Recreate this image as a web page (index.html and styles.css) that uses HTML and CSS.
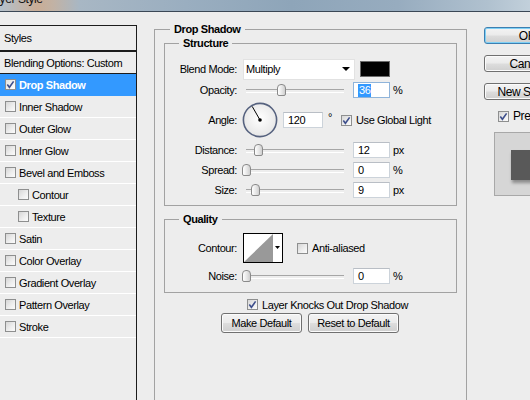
FILE: index.html
```html
<!DOCTYPE html>
<html>
<head>
<meta charset="utf-8">
<title>Layer Style</title>
<link rel="stylesheet" href="styles.css">
</head>
<body>
<div class="titlebar"><span class="title">Layer Style</span></div>
<div class="dialog">
  <div class="styles-panel">
    <div class="styles-head">Styles</div>
    <div class="style-row blending">Blending Options: Custom</div>
    <div class="style-row selected"><span class="cb"><svg viewBox="0 0 11 11" width="11" height="11"><path d="M2.3 5.6 L4.4 8.3 L8.6 2.4" fill="none" stroke="#3e4f8c" stroke-width="1.6"/></svg></span>Drop Shadow</div>
    <div class="style-row"><span class="cb"></span>Inner Shadow</div>
    <div class="style-row"><span class="cb"></span>Outer Glow</div>
    <div class="style-row"><span class="cb"></span>Inner Glow</div>
    <div class="style-row"><span class="cb"></span>Bevel and Emboss</div>
    <div class="style-row sub"><span class="cb"></span>Contour</div>
    <div class="style-row sub"><span class="cb"></span>Texture</div>
    <div class="style-row"><span class="cb"></span>Satin</div>
    <div class="style-row"><span class="cb"></span>Color Overlay</div>
    <div class="style-row"><span class="cb"></span>Gradient Overlay</div>
    <div class="style-row"><span class="cb"></span>Pattern Overlay</div>
    <div class="style-row"><span class="cb"></span>Stroke</div>
  </div>

  <fieldset class="group outer">
    <legend>Drop Shadow</legend>
    <fieldset class="group inner">
      <legend>Structure</legend>
      <div class="row row-blend">
        <span class="label">Blend Mode:</span>
        <div class="select"><span>Multiply</span><span class="arrow"></span></div>
        <span class="swatch"></span>
      </div>
      <div class="row row-first">
        <span class="label">Opacity:</span>
        <div class="slider"><span class="thumb" style="left:31px"></span></div>
        <div class="field focused"><span class="sel">36</span></div>
        <span class="unit">%</span>
      </div>
      <div class="row row-angle">
        <span class="label">Angle:</span>
        <svg class="dial" width="36" height="36" viewBox="0 0 36 36">
          <defs>
            <radialGradient id="dg" cx="50%" cy="45%" r="60%">
              <stop offset="0" stop-color="#ffffff"/>
              <stop offset="1" stop-color="#e4e4e4"/>
            </radialGradient>
          </defs>
          <circle cx="18" cy="18" r="16.6" fill="url(#dg)" stroke="#56627f" stroke-width="1.6"/>
          <line x1="18" y1="18" x2="10.2" y2="4.4" stroke="#000" stroke-width="1"/>
          <circle cx="18" cy="18" r="1.8" fill="#000"/>
        </svg>
        <div class="field angle">120</div>
        <span class="deg">°</span>
        <span class="cb global"><svg viewBox="0 0 11 11" width="11" height="11"><path d="M2.3 5.6 L4.4 8.3 L8.6 2.4" fill="none" stroke="#3e4f8c" stroke-width="1.6"/></svg></span>
        <span class="cb-label">Use Global Light</span>
      </div>
      <div class="row">
        <span class="label">Distance:</span>
        <div class="slider"><span class="thumb" style="left:8px"></span></div>
        <div class="field">12</div>
        <span class="unit">px</span>
      </div>
      <div class="row">
        <span class="label">Spread:</span>
        <div class="slider"><span class="thumb" style="left:-4px"></span></div>
        <div class="field">0</div>
        <span class="unit">%</span>
      </div>
      <div class="row">
        <span class="label">Size:</span>
        <div class="slider"><span class="thumb" style="left:5px"></span></div>
        <div class="field">9</div>
        <span class="unit">px</span>
      </div>
    </fieldset>

    <fieldset class="group inner quality">
      <legend>Quality</legend>
      <div class="row row-contour">
        <span class="label">Contour:</span>
        <svg class="contour" width="40" height="30" viewBox="0 0 40 30">
          <rect x="0.5" y="0.5" width="39" height="29" fill="#fff" stroke="#000"/>
          <polygon points="1,29 30,1 30,29" fill="#999"/>
          <polygon points="32,13 37,13 34.5,16" fill="#000"/>
        </svg>
        <span class="cb anti"></span>
        <span class="cb-label">Anti-aliased</span>
      </div>
      <div class="row">
        <span class="label">Noise:</span>
        <div class="slider"><span class="thumb" style="left:-4px"></span></div>
        <div class="field">0</div>
        <span class="unit">%</span>
      </div>
    </fieldset>

    <div class="knocks">
      <span class="cb"><svg viewBox="0 0 11 11" width="11" height="11"><path d="M2.3 5.6 L4.4 8.3 L8.6 2.4" fill="none" stroke="#3e4f8c" stroke-width="1.6"/></svg></span>
      <span class="cb-label">Layer Knocks Out Drop Shadow</span>
    </div>
    <div class="defaults">
      <div class="btn make">Make Default</div>
      <div class="btn reset">Reset to Default</div>
    </div>
  </fieldset>

  <div class="side">
    <div class="btn side-btn ok">OK</div>
    <div class="btn side-btn">Cancel</div>
    <div class="btn side-btn">New Style...</div>
    <div class="preview-row">
      <span class="cb"><svg viewBox="0 0 11 11" width="11" height="11"><path d="M2.3 5.6 L4.4 8.3 L8.6 2.4" fill="none" stroke="#3e4f8c" stroke-width="1.6"/></svg></span>
      <span class="cb-label big">Preview</span>
    </div>
    <div class="preview-box"><div class="preview-square"></div></div>
  </div>
</div>
</body>
</html>
```

FILE: styles.css
```css
* { box-sizing: border-box; }
html, body { margin: 0; padding: 0; }
body {
  width: 530px;
  height: 400px;
  overflow: hidden;
  background: #ededed;
  font-family: "Liberation Sans", Arial, sans-serif;
  font-size: 11px;
  letter-spacing: -0.4px;
  color: #000;
}

.titlebar {
  height: 12px;
  overflow: hidden;
  border-bottom: 1px solid #3b4856;
  background: linear-gradient(to right, #b3c1cd 0%, #c9ad96 7%, #c2b2a4 10%, #a8b7c4 15%, #9aaec0 35%, #8ea5b9 55%, #97acbf 75%, #b0c1cf 92%, #c2d0db 100%);
}
.title {
  display: block;
  font-size: 12px;
  line-height: 12px;
  margin: -7px 0 0 -13px;
  color: #111;
}

.dialog {
  display: flex;
  align-items: flex-start;
}

/* Left styles list */
.styles-panel {
  flex: none;
  width: 137px;
  height: 400px;
  margin-top: 13px;
  border-top: 1px solid #1c1c1c;
  border-right: 1px solid #1c1c1c;
}
.styles-head {
  height: 26px;
  padding-left: 4px;
  display: flex;
  align-items: center;
  border-bottom: 2px solid #1c1c1c;
}
.style-row {
  height: 22px;
  display: flex;
  align-items: center;
  gap: 3px;
  padding-left: 5px;
  border-bottom: 1px solid #ffffff;
  white-space: nowrap;
}
.style-row.blending {
  padding-left: 4px;
  border-bottom-color: #1c1c1c;
}
.style-row.sub { padding-left: 18px; }
.style-row.selected {
  background: #3399ff;
  color: #fff;
  font-weight: bold;
  border-bottom-color: #3399ff;
}

/* Checkbox */
.cb {
  flex: none;
  display: inline-block;
  width: 11px;
  height: 11px;
  border: 1px solid #8e8f8f;
  background: linear-gradient(135deg, #d6d6d6 0%, #efefef 60%, #fbfbfb 100%);
}
.cb svg {
  display: block;
  margin: -1px 0 0 -1px;
}
.selected .cb { background: linear-gradient(135deg, #e2e2e2, #ffffff); }
.cb-label { margin-left: 4px; white-space: nowrap; }
.cb-label.big { font-size: 12px; }

/* Group boxes */
.group {
  margin: 0;
  min-width: 0;
  border: 1px solid #a2a2a2;
}
.group > legend {
  padding: 0 4px;
  font-weight: bold;
  line-height: 14px;
}
.outer {
  flex: none;
  width: 313px;
  margin: 10px 0 0 17px;
  padding: 0 9px 140px;
}
.outer > legend { margin-left: 6px; }
.inner { padding: 8px 0 7px; }
.inner > legend { margin-left: 14px; }
.inner.quality { margin-top: 6px; padding: 6px 0 8px; }

/* Rows */
.row {
  display: flex;
  align-items: center;
  height: 16px;
  margin-top: 4px;
  white-space: nowrap;
}
.row-blend { height: 22px; margin-top: 0; }
.row-first { margin-top: 2px; }
.row-angle { height: 36px; }
.row-contour { height: 32px; margin-top: 0; }
.label {
  flex: none;
  width: 72px;
  text-align: right;
}

.select {
  flex: none;
  width: 112px;
  height: 21px;
  margin-left: 6px;
  background: #fff;
  border: 1px solid #e2e2e2;
  display: flex;
  align-items: center;
  justify-content: space-between;
  padding: 0 4px 0 2px;
}
.arrow {
  width: 0;
  height: 0;
  border-left: 4px solid transparent;
  border-right: 4px solid transparent;
  border-top: 4px solid #000;
}
.swatch {
  flex: none;
  width: 30px;
  height: 16px;
  margin-left: 5px;
  background: #000;
  border: 1px solid #6a6a6a;
}

.slider {
  flex: none;
  position: relative;
  width: 98px;
  height: 16px;
  margin-left: 9px;
}
.slider::before {
  content: "";
  position: absolute;
  left: 0;
  right: 0;
  top: 7px;
  height: 2px;
  border-top: 1px solid #a6a6a6;
  border-bottom: 1px solid #ffffff;
}
.thumb {
  position: absolute;
  top: 2px;
  width: 9px;
  height: 12px;
  border: 1px solid #8a8a8a;
  border-radius: 4px 4px 2px 2px;
  background: linear-gradient(to right, #ffffff, #e4e4e4 60%, #cfcfcf);
}

.field {
  flex: none;
  width: 37px;
  height: 16px;
  margin-left: 9px;
  background: #fff;
  border: 1px solid #ccd3da;
  border-top-color: #b9bec5;
  display: flex;
  align-items: center;
  padding-left: 4px;
}
.field.focused { border-color: #8fb4da; }
.sel {
  background: #3399ff;
  color: #fff;
  line-height: 13px;
  padding: 0 1px;
}
.unit { margin-left: 3px; }

.dial { flex: none; margin-left: 5px; display: block; }
.field.angle { width: 40px; margin-left: 5px; }
.deg { margin-left: 5px; margin-top: -6px; }
.cb.global { margin-left: 9px; }

.contour { flex: none; display: block; margin-left: 6px; }
.cb.anti { margin-left: 14px; }

.knocks {
  display: flex;
  align-items: center;
  height: 13px;
  margin-top: 5px;
  padding-left: 83px;
}
.defaults {
  display: flex;
  gap: 6px;
  margin-top: 2px;
  padding-left: 57px;
}

/* Buttons */
.btn {
  display: flex;
  align-items: center;
  justify-content: center;
  height: 20px;
  border: 1px solid #707070;
  border-radius: 3px;
  background: linear-gradient(#f3f3f3 0%, #ebebeb 48%, #dddddd 52%, #cfcfcf 100%);
  box-shadow: inset 0 0 0 1px #fbfbfb;
  white-space: nowrap;
}
.btn.make { width: 81px; }
.btn.reset { width: 91px; }

.side {
  flex: none;
  width: 90px;
  margin: 15px 0 0 17px;
}
.side-btn {
  width: 86px;
  height: 17px;
  margin-top: 11px;
  font-size: 12px;
}
.side-btn.ok {
  margin-top: 0;
  border-color: #3c7fb1;
  box-shadow: inset 0 0 0 1px #7fd0f5;
}
.preview-row {
  display: flex;
  align-items: center;
  height: 12px;
  margin-top: 10px;
  padding-left: 14px;
}
.preview-box {
  width: 80px;
  height: 64px;
  margin: 10px 0 0 10px;
  background: #d6d6d6;
  border: 1px solid #a8a8a8;
  padding: 17px 0 0 16px;
}
.preview-square {
  width: 60px;
  height: 30px;
  background: #595959;
  box-shadow: 1px 3px 3px rgba(0, 0, 0, 0.35);
}
```
